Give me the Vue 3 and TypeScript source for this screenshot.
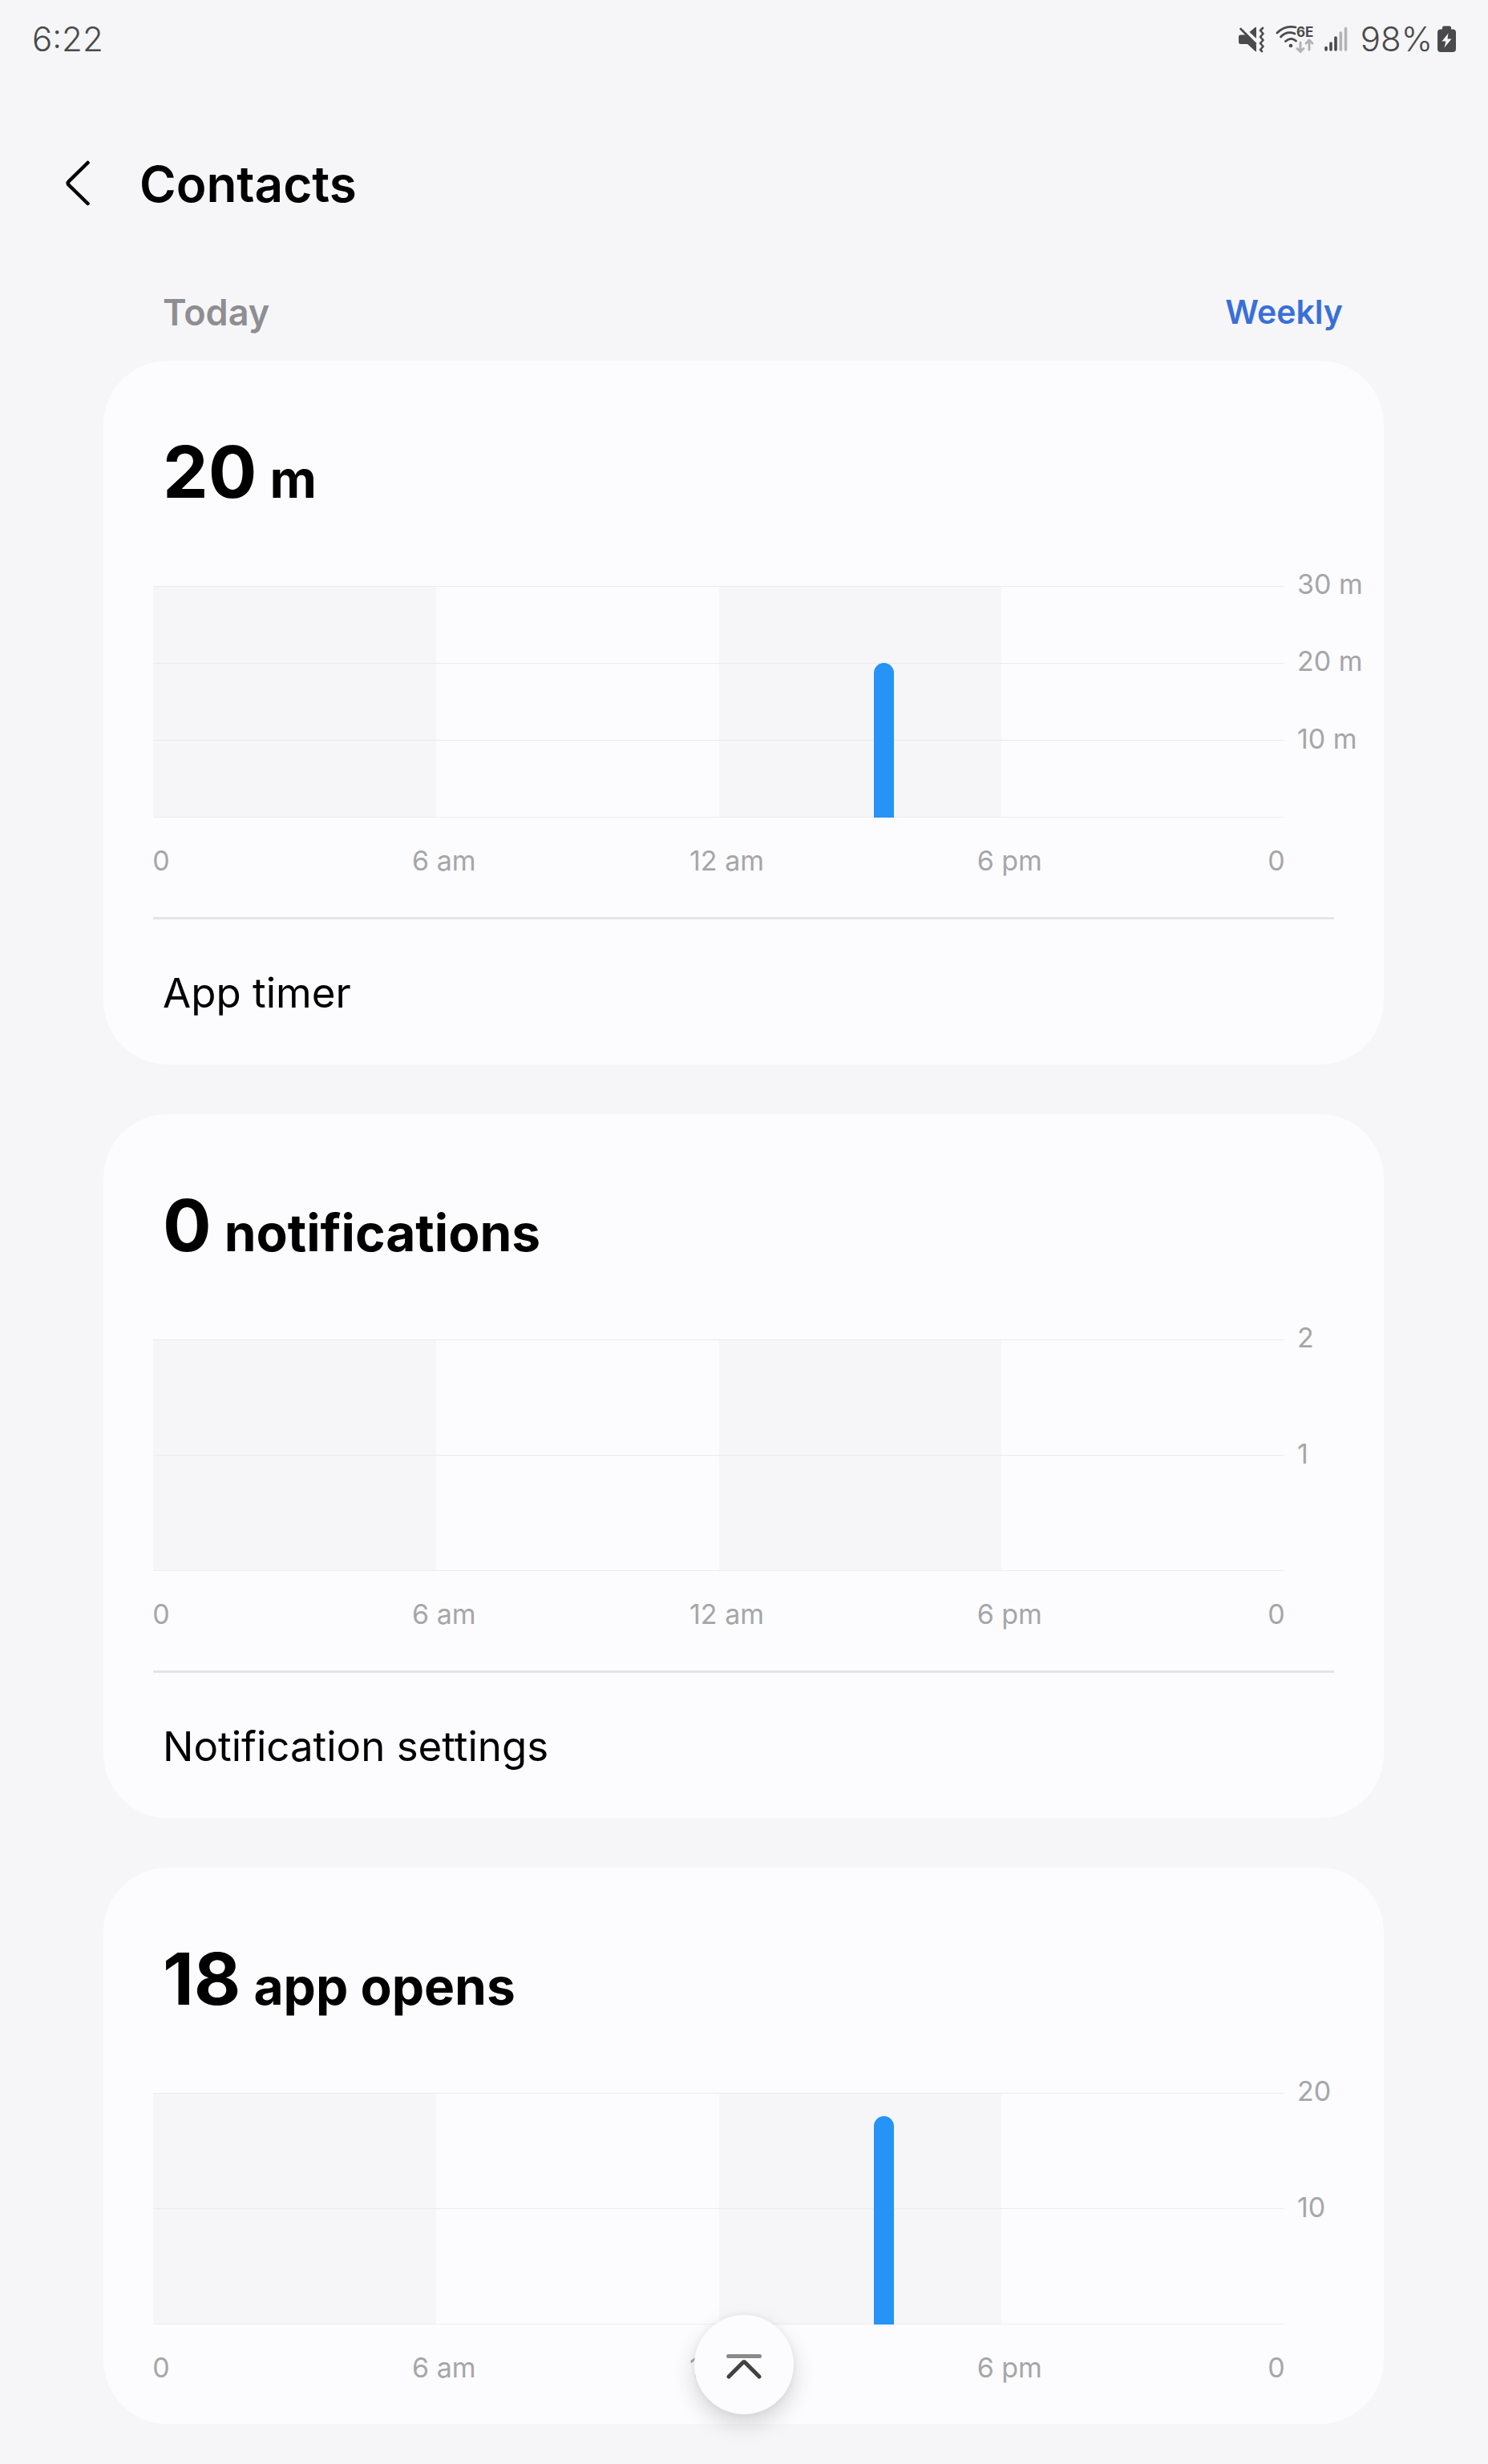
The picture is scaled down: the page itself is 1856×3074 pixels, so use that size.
<script setup lang="ts">
interface UsageCard {
  id: string
  value: string
  unit: string
  max: number
  ticks: string[]
  bars: { hour: number; amount: number }[]
  action?: string
}

const hours = 24
const hourLabels = ['0', '6 am', '12 am', '6 pm', '0']

const cards: UsageCard[] = [
  {
    id: 'screen-time',
    value: '20',
    unit: 'm',
    max: 30,
    ticks: ['30 m', '20 m', '10 m'],
    bars: [{ hour: 15, amount: 20 }],
    action: 'App timer',
  },
  {
    id: 'notifications',
    value: '0',
    unit: 'notifications',
    max: 2,
    ticks: ['2', '1'],
    bars: [],
    action: 'Notification settings',
  },
  {
    id: 'app-opens',
    value: '18',
    unit: 'app opens',
    max: 20,
    ticks: ['20', '10'],
    bars: [{ hour: 15, amount: 18 }],
  },
]

function amountAt(card: UsageCard, hour: number): number {
  return card.bars.find((bar) => bar.hour === hour)?.amount ?? 0
}

function scrollToTop(): void {
  window.scrollTo({ top: 0, behavior: 'smooth' })
}
</script>

<template>
  <div class="page">
    <div class="status-bar">
      <span class="status-text">6:22</span>
      <div class="status-icons">
        <svg class="icon-mute" width="34" height="34" viewBox="0 0 34 34" aria-label="Vibrate">
          <path d="M2 13.5 Q2 11.5 4.5 11.5 H11 L24 24.5 V31.5 Q24 33 22.5 31.8 L13 23 H5 Q2 23 2 20.5 Z" fill="#4a4a4c" />
          <path d="M15.5 8 L22.5 2.2 Q24 1.2 24 3 V16 Z" fill="#4a4a4c" />
          <path d="M4.5 4 L23 22.5" stroke="#4a4a4c" stroke-width="2.6" stroke-linecap="round" />
          <path
            d="M32 3 L29 6 L32.5 10 L29 14 L32.5 18 L29 22 L32.5 26 L29 30 L31 32"
            fill="none"
            stroke="#4a4a4c"
            stroke-width="2.6"
            stroke-linecap="round"
            stroke-linejoin="round"
          />
        </svg>
        <svg class="icon-wifi" width="50" height="36" viewBox="0 0 50 36" aria-label="Wi-Fi 6E">
          <g fill="none" stroke="#4a4a4c" stroke-width="2.8" stroke-linecap="round">
            <path d="M2 10 Q12 0 25 3" />
            <path d="M6.5 15 Q14 7 24 11" />
            <path d="M12.5 20.5 Q19 14.5 25.5 20" />
          </g>
          <circle cx="19" cy="26" r="2.3" fill="#4a4a4c" />
          <text class="wifi-label" x="26" y="15" fill="#4a4a4c">6E</text>
          <g fill="none" stroke="#b4b4b6" stroke-width="3" stroke-linecap="round" stroke-linejoin="round">
            <path d="M31 22 V33 M27 29.5 L31 33.5 L35 29.5" />
            <path d="M42 31 V20 M38 23 L42 19 L46 23" />
          </g>
        </svg>
        <svg class="icon-signal" width="30" height="32" viewBox="0 0 30 32" aria-label="Signal">
          <g stroke-width="3.6" stroke-linecap="round">
            <path d="M3 26.5 V29" stroke="#4a4a4c" />
            <path d="M9 21 V29" stroke="#4a4a4c" />
            <path d="M15 14 V29" stroke="#4a4a4c" />
            <path d="M21.3 8 V29" stroke="#b4b4b6" />
            <path d="M27.5 2.5 V29" stroke="#b4b4b6" />
          </g>
        </svg>
        <span class="status-text">98%</span>
        <svg class="icon-battery" width="23" height="34" viewBox="0 0 23 34" aria-label="Charging">
          <path
            d="M8 0.5 H15 Q17 0.5 17 2.5 V4.5 H19 Q23 4.5 23 8.5 V29 Q23 33 19 33 H4 Q0 33 0 29 V8.5 Q0 4.5 4 4.5 H6 V2.5 Q6 0.5 8 0.5 Z"
            fill="#4a4a4c"
          />
          <path d="M13.5 9.5 L5.5 19.5 H10.5 L8.5 27.5 L17.5 16.5 H12.5 Z" fill="#f6f6f8" />
        </svg>
      </div>
    </div>

    <header class="header">
      <button class="back" type="button" aria-label="Back">
        <svg width="32" height="60" viewBox="0 0 32 60">
          <path
            d="M29.5 3 L6 26 Q3.5 28.5 6 31 L29.5 54"
            fill="none"
            stroke="#000000"
            stroke-width="4.5"
            stroke-linecap="round"
            stroke-linejoin="round"
          />
        </svg>
      </button>
      <h1 class="title">Contacts</h1>
    </header>

    <main class="content">
      <div class="range">
        <span class="range-current">Today</span>
        <button class="range-switch" type="button">Weekly</button>
      </div>

      <section v-for="card in cards" :key="card.id" class="card">
        <h2 class="summary">
          <span class="summary-value">{{ card.value }}</span>
          <span class="summary-unit">{{ card.unit }}</span>
        </h2>

        <div class="chart">
          <div class="plot">
            <div class="bands">
              <span v-for="n in 4" :key="n" class="band"></span>
            </div>
            <div class="lines">
              <span v-for="tick in card.ticks" :key="tick" class="line"></span>
            </div>
            <div class="bars">
              <div v-for="h in hours" :key="h" class="slot">
                <span
                  v-if="amountAt(card, h - 1) > 0"
                  class="bar"
                  :style="{ height: (amountAt(card, h - 1) / card.max) * 100 + '%' }"
                ></span>
              </div>
            </div>
          </div>
          <div class="y-axis">
            <div v-for="tick in card.ticks" :key="tick" class="y-cell">
              <span class="y-label">{{ tick }}</span>
            </div>
          </div>
        </div>

        <div class="x-axis">
          <span v-for="(label, i) in hourLabels" :key="i" class="x-label">{{ label }}</span>
        </div>

        <button v-if="card.action" class="action" type="button">{{ card.action }}</button>
      </section>
    </main>

    <button class="to-top" type="button" aria-label="Go to top" @click="scrollToTop">
      <svg width="48" height="36" viewBox="0 0 48 36">
        <path d="M4.5 7.5 H43.5" stroke="#8a8a8a" stroke-width="5" stroke-linecap="round" />
        <path
          d="M5 33 L22.5 15.5 Q24 14 25.5 15.5 L43 33"
          fill="none"
          stroke="#414141"
          stroke-width="5"
          stroke-linecap="round"
          stroke-linejoin="round"
        />
      </svg>
    </button>
  </div>
</template>

<style>
body {
  margin: 0;
  background: #f6f6f8;
}
</style>

<style scoped>
.page {
  box-sizing: border-box;
  min-height: 100vh;
  padding-bottom: 50px;
  background: #f6f6f8;
  color: #000000;
  font-family: Inter, Roboto, 'Liberation Sans', sans-serif;
}

button {
  margin: 0;
  padding: 0;
  border: 0;
  background: none;
  color: inherit;
  font: inherit;
  cursor: pointer;
}

svg {
  display: block;
  flex: none;
}

.status-bar {
  display: flex;
  align-items: center;
  justify-content: space-between;
  height: 98px;
  padding: 0 40px;
}

.status-text {
  color: #4a4a4c;
  font-size: 42px;
  font-weight: 350;
  line-height: 48px;
}

.status-icons {
  display: flex;
  align-items: center;
}

.icon-wifi {
  margin-left: 14px;
}

.wifi-label {
  font-size: 17px;
  font-weight: 700;
}

.icon-signal {
  margin-left: 10px;
}

.icon-signal + .status-text {
  margin-left: 16px;
}

.icon-battery {
  margin-left: 6px;
}

.header {
  display: flex;
  align-items: center;
  height: 264px;
  padding: 0 80px;
}

.title {
  margin: 0 0 0 62px;
  font-size: 62px;
  font-weight: 600;
  line-height: 80px;
}

.content {
  display: flex;
  flex-direction: column;
  padding: 0 130px 0 129px;
}

.range {
  display: flex;
  align-items: center;
  justify-content: space-between;
  height: 54px;
  padding: 0 51px 34px 74px;
}

.range-current {
  color: #8e8e93;
  font-size: 45px;
  font-weight: 600;
}

.range-switch {
  color: #3a6fd8;
  font-size: 41px;
  font-weight: 600;
}

.card {
  padding: 83px 62px 0;
  border-radius: 80px;
  background: #fcfcfe;
}

.card + .card {
  margin-top: 62px;
}

.summary {
  display: flex;
  align-items: baseline;
  gap: 16px;
  margin: 0 0 86px;
  padding-left: 12px;
  font-weight: 700;
}

.summary-value {
  font-size: 90px;
  line-height: 112px;
}

.summary-unit {
  font-size: 64px;
  line-height: 80px;
}

.chart {
  display: flex;
  height: 289px;
}

.plot {
  position: relative;
  flex: 1;
}

.bands,
.lines,
.bars {
  position: absolute;
  inset: 0;
  display: flex;
}

.band {
  flex: 1;
}

.band:nth-child(odd) {
  background: #f6f6f8;
}

.lines {
  flex-direction: column;
  border-bottom: 1px solid #eeeef0;
}

.line {
  flex: 1;
  border-top: 1px solid #ebebed;
}

.slot {
  display: flex;
  flex: 1;
  align-items: flex-end;
  justify-content: center;
}

.bar {
  width: 25px;
  border-radius: 13px 13px 0 0;
  background: #2693f6;
}

.y-axis {
  display: flex;
  flex-direction: column;
  width: 46px;
  margin-top: -2px;
  padding: 0 0 2px 16px;
}

.y-cell {
  flex: 1;
}

.y-label {
  display: flex;
  align-items: center;
  height: 0;
  color: #a6a6a8;
  font-size: 34px;
  line-height: 40px;
  white-space: nowrap;
}

.x-axis {
  display: grid;
  grid-template-columns: repeat(3, 25%) 1fr 20px;
  margin: 34px 62px 0 0;
  padding-bottom: 50px;
}

.x-label {
  display: flex;
  justify-content: center;
  width: 20px;
  color: #a6a6a8;
  font-size: 34px;
  line-height: 40px;
  white-space: nowrap;
}

.action {
  display: block;
  box-sizing: border-box;
  width: 100%;
  height: 184px;
  padding: 2px 0 0 12px;
  border-top: 3px solid #e3e4e6;
  font-size: 51px;
  line-height: 64px;
  text-align: left;
}

.to-top {
  position: fixed;
  right: 0;
  bottom: 62px;
  left: 0;
  display: flex;
  align-items: center;
  justify-content: center;
  width: 124px;
  height: 124px;
  margin: 0 auto;
  border-radius: 50%;
  background: #fcfcfe;
  box-shadow:
    0 12px 28px rgba(0, 0, 0, 0.16),
    0 0 10px rgba(0, 0, 0, 0.06);
}
</style>
